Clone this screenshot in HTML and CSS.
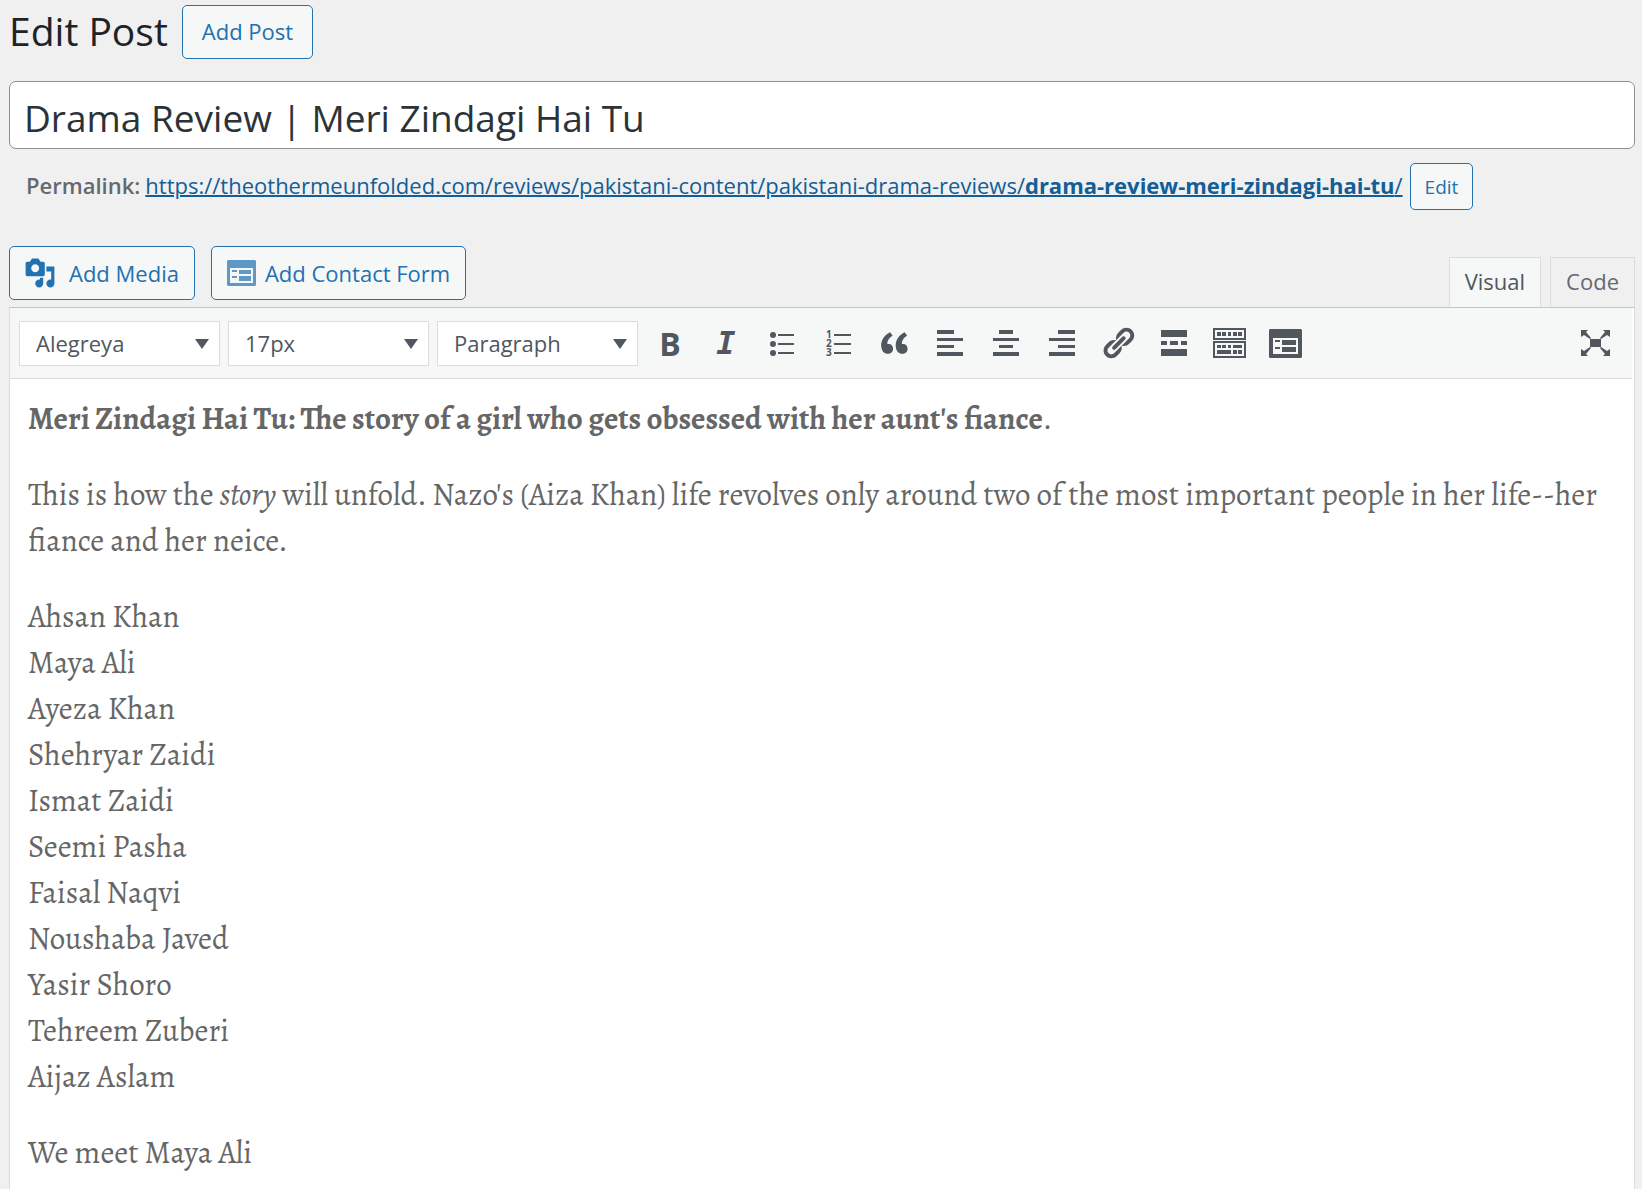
FILE: index.html
```html
<!DOCTYPE html>
<html lang="en">

<head>
  <meta charset="UTF-8">
  <meta name="viewport" content="width=device-width, initial-scale=1.0">
  <title>Edit Post</title>
  <link rel="stylesheet" href="styles.css">
</head>

<body>
  <div class="header">
    <h1>Edit Post</h1>
    <button type="button" class="button">Add Post</button>
  </div>

  <input type="text" class="post-title" id="title" name="title" aria-label="Title" value="Drama Review | Meri Zindagi Hai Tu">

  <div class="permalink">
    <strong>Permalink:</strong>
    <a href="#">https://theothermeunfolded.com/reviews/pakistani-content/pakistani-drama-reviews/<b>drama-review-meri-zindagi-hai-tu</b>/</a>
    <button type="button" class="button small">Edit</button>
  </div>

  <div class="editor-tools">
    <div class="media-buttons">
      <button type="button" class="button media">
        <svg width="32" height="32" viewBox="0 0 20 20"><path d="M13 11V4c0-.55-.45-1-1-1h-1.67L9 1H5L3.67 3H2c-.55 0-1 .45-1 1v7c0 .55.45 1 1 1h10c.55 0 1-.45 1-1zM7 4.500c1.380 0 2.500 1.120 2.500 2.500S8.380 9.500 7 9.500 4.500 8.380 4.500 7 5.620 4.500 7 4.500zM14 6h5v10.500c0 1.380-1.120 2.500-2.500 2.500S14 17.880 14 16.500s1.120-2.500 2.500-2.500c.17 0 .34.02.5.05V9h-3V6zm-4 8.050V13h2v3.500c0 1.380-1.120 2.500-2.500 2.500S7 17.880 7 16.500 8.120 14 9.500 14c.17 0 .34.02.5.05z"/></svg>
        Add Media
      </button>
      <button type="button" class="button form">
        <svg class="form-icon" width="29" height="26" viewBox="0 0 29 26"><path fill-rule="evenodd" d="M1 0h27l1 1v24l-1 1H1l-1-1V1zM3 8v15h23V8zM5 10h5v2H5zM12 10h12v4H12zM5 16h5v2H5zM12 16h12v5H12z"/></svg>
        Add Contact Form
      </button>
    </div>
    <div class="tabs">
      <button type="button" class="tab active">Visual</button>
      <button type="button" class="tab">Code</button>
    </div>
  </div>

  <div class="editor">
    <div class="toolbar">
      <div class="select"><select aria-label="Font family"><option>Alegreya</option></select></div>
      <div class="select"><select aria-label="Font size"><option>17px</option></select></div>
      <div class="select"><select aria-label="Format"><option>Paragraph</option></select></div>
      <div class="icons">
        <button type="button" class="icon bold" title="Bold">B</button>
        <button type="button" class="icon italic" title="Italic">I</button>
        <button type="button" class="icon" title="Bulleted list">
          <svg width="36" height="36" viewBox="0 0 36 36"><circle cx="9" cy="10" r="3"/><circle cx="9" cy="19" r="3"/><circle cx="9" cy="28" r="3"/><path d="M14 9h16v2H14zM14 18h16v2H14zM14 27h16v2H14z"/></svg>
        </button>
        <button type="button" class="icon" title="Numbered list">
          <svg width="36" height="36" viewBox="0 0 36 36"><text x="6" y="13">1</text><text x="6" y="22">2</text><text x="6" y="31">3</text><path d="M14 9h17v2H14zM14 18h17v2H14zM14 27h17v2H14z"/></svg>
        </button>
        <button type="button" class="icon" title="Blockquote">
          <svg width="36" height="36" viewBox="0 0 20 20"><path d="M9.490 13.220c0-.74-.2-1.380-.61-1.900-.62-.78-1.830-.88-2.530-.72-.29-1.650 1.110-3.750 2.920-4.650L7.880 4c-2.730 1.300-5.420 4.280-4.960 8.050C3.210 14.430 4.590 16 6.540 16c.85 0 1.560-.25 2.120-.75s.83-1.180.83-2.030zm8.050 0c0-.74-.2-1.380-.61-1.900-.63-.78-1.830-.88-2.530-.72-.29-1.650 1.110-3.750 2.920-4.650L15.930 4c-2.730 1.300-5.410 4.280-4.950 8.050.29 2.380 1.660 3.950 3.610 3.950.85 0 1.560-.25 2.120-.75s.83-1.180.83-2.030z"/></svg>
        </button>
        <button type="button" class="icon" title="Align left">
          <svg width="36" height="36" viewBox="0 0 36 36"><path d="M5 5h17v4H5zM5 13h26v3H5zM5 20h17v3H5zM5 27h26v4H5z"/></svg>
        </button>
        <button type="button" class="icon" title="Align center">
          <svg width="36" height="36" viewBox="0 0 36 36"><path d="M11 5h14v4H11zM5 13h26v3H5zM11 20h14v3H11zM5 27h26v4H5z"/></svg>
        </button>
        <button type="button" class="icon" title="Align right">
          <svg width="36" height="36" viewBox="0 0 36 36"><path d="M14 5h17v4H14zM5 13h26v3H5zM14 20h17v3H14zM5 27h26v4H5z"/></svg>
        </button>
        <button type="button" class="icon" title="Insert link">
          <svg width="36" height="36" viewBox="0 0 20 20"><path d="M17.740 2.760c1.680 1.690 1.680 4.410 0 6.100l-1.530 1.520c-1.120 1.120-2.700 1.470-4.140 1.090l2.620-2.610.76-.77.76-.76c.84-.84.84-2.200 0-3.040-.84-.85-2.200-.85-3.040 0l-.77.76-3.380 3.380c-.37-1.440-.02-3.020 1.100-4.140l1.520-1.530c1.690-1.680 4.420-1.680 6.100 0zM8.590 13.430l5.340-5.340c.42-.42.42-1.100 0-1.520-.44-.43-1.130-.39-1.530 0l-5.330 5.340c-.42.42-.42 1.100 0 1.520.44.43 1.130.39 1.520 0zm-.76 2.290l4.140-4.150c.38 1.440.03 3.020-1.090 4.140l-1.520 1.530c-1.690 1.680-4.410 1.680-6.100 0-1.680-1.680-1.680-4.420 0-6.100l1.530-1.520c1.120-1.120 2.700-1.470 4.140-1.100l-4.140 4.150c-.85.84-.85 2.200 0 3.050.84.84 2.200.84 3.040 0z"/></svg>
        </button>
        <button type="button" class="icon" title="Read more">
          <svg width="36" height="36" viewBox="0 0 36 36"><path d="M5 5h26v7H5zM5 16h6v4H5zM14 16h8v4h-8zM25 16h6v4h-6zM5 24h26v7H5z"/></svg>
        </button>
        <button type="button" class="icon" title="Toolbar toggle">
          <svg width="36" height="36" viewBox="0 0 36 36"><path fill-rule="evenodd" d="M1 3h33v12H1zM3 5v8h29V5zM5 7h4v4H5zM10 7h4v4h-4zM16 7h3v4h-3zM21 7h4v4h-4zM26 7h4v4h-4zM1 16h33v17H1zM3 18v13h29V18zM5 20h4v3H5zM10 20h4v3h-4zM16 20h3v3h-3zM21 20h9v3h-9zM5 25h14v4H5zM21 25h4v4h-4zM26 25h4v4h-4z"/></svg>
        </button>
        <button type="button" class="icon" title="Contact form">
          <svg width="36" height="36" viewBox="0 0 36 36"><path fill-rule="evenodd" d="M2 4h31l1 1v27l-1 1H2l-1-1V5zM5 13v16h25V13zM7 15h5v2H7zM14 15h14v5H14zM7 22h5v2H7zM14 22h14v5H14z"/></svg>
        </button>
      </div>
      <button type="button" class="icon fullscreen" title="Distraction-free writing mode">
        <svg width="36" height="36" viewBox="0 0 36 36"><path d="M13 14h11v8H13zM4 5h7l-2 2 5 6-1 1-6-4-3 2zM33 5h-7l2 2-5 6 1 1 6-4 3 2zM4 31h7l-2-2 5-6-1-1-6 4-3-2zM33 31h-7l2-2-5-6 1-1 6 4 3-2z"/></svg>
      </button>
    </div>

    <div class="content" contenteditable="true" spellcheck="false">
      <p><strong>Meri Zindagi Hai Tu: The story of a girl who gets obsessed with her aunt's fiance</strong>.</p>
      <p>This is how the <em>story</em> will unfold. Nazo's (Aiza Khan) life revolves only around two of the most important people in her life--her fiance and her neice.</p>
      <p>Ahsan Khan<br>
        Maya Ali<br>
        Ayeza Khan<br>
        Shehryar Zaidi<br>
        Ismat Zaidi<br>
        Seemi Pasha<br>
        Faisal Naqvi<br>
        Noushaba Javed<br>
        Yasir Shoro<br>
        Tehreem Zuberi<br>
        Aijaz Aslam</p>
      <p>We meet Maya Ali</p>
    </div>
  </div>
</body>

</html>
```
FILE: styles.css
```css
* {
  box-sizing: border-box;
}

body {
  display: flex;
  flex-direction: column;
  min-height: 100vh;
  margin: 0;
  padding: 5px 7px 0 9px;
  background-color: #f0f0f1;
  color: #646970;
  font-family: "Open Sans", "Noto Sans", sans-serif;
  font-size: 22px;
}

button,
input,
select {
  font-family: inherit;
  font-size: 22px;
}

svg {
  display: block;
  flex: none;
  fill: currentColor;
}

.header {
  display: flex;
  align-items: center;
  gap: 14px;
}

h1 {
  margin: 0;
  color: #1d2327;
  font-size: 39px;
  font-weight: 400;
  line-height: 52px;
  padding-bottom: 2px;
}

.button {
  display: flex;
  align-items: center;
  height: 54px;
  padding: 0 19px 2px;
  border: 1px solid #2271b1;
  border-radius: 5px;
  background-color: #f6f7f7;
  color: #2271b1;
  white-space: nowrap;
  cursor: pointer;
}

.button.small {
  height: 47px;
  padding: 0 14px;
  font-size: 19px;
}

.button.media {
  gap: 13px;
  padding: 0 15px 0 14px;
}

.button.form {
  gap: 9px;
  padding: 0 15px;
}

.form-icon {
  opacity: 0.7;
}

.post-title {
  width: 100%;
  height: 68px;
  margin-top: 22px;
  padding: 4px 14px 0;
  border: 1px solid #8c8f94;
  border-radius: 7px;
  background-color: #fff;
  color: #2c3338;
  font-size: 37px;
}

.permalink {
  display: flex;
  align-items: center;
  margin-top: 14px;
  padding-left: 17px;
  line-height: 43px;
  white-space: nowrap;
}

.permalink strong {
  font-weight: 600;
}

.permalink strong,
.permalink a {
  padding-bottom: 2px;
}

.permalink a {
  margin: 0 7px 0 5px;
  color: #135e96;
  text-decoration-thickness: 2px;
}

.permalink b {
  font-weight: 700;
}

.editor-tools {
  display: flex;
  justify-content: space-between;
  align-items: flex-end;
  margin-top: 36px;
}

.media-buttons {
  display: flex;
  gap: 16px;
  margin-bottom: 7px;
}

.tabs {
  display: flex;
  gap: 9px;
}

.tab {
  height: 50px;
  padding: 0 15px 4px;
  border: 1px solid #dcdcde;
  border-bottom: none;
  background-color: #f0f0f1;
  color: #646970;
  cursor: pointer;
}

.tab.active {
  background-color: #f6f7f7;
  color: #50575e;
}

.editor {
  flex: 1;
  border: 1px solid #dcdcde;
  border-top-color: #c3c4c7;
  border-bottom: none;
  background-color: #fff;
}

.toolbar {
  display: flex;
  align-items: center;
  gap: 8px;
  height: 71px;
  margin-right: 2px;
  padding: 0 19px 0 9px;
  border-bottom: 1px solid #dcdcde;
  background-color: #f6f7f7;
}

.select {
  position: relative;
  width: 201px;
}

.select select {
  display: block;
  width: 100%;
  height: 45px;
  padding: 0 32px 0 16px;
  border: 1px solid #dcdcde;
  border-radius: 0;
  background-color: #fff;
  color: #50575e;
  appearance: none;
}

/* dropdown arrow */
.select::after {
  content: "";
  position: absolute;
  top: 18px;
  right: 11px;
  border: 7px solid transparent;
  border-top: 10px solid #50575e;
  border-bottom: none;
  pointer-events: none;
}

.icons {
  display: flex;
  gap: 20px;
  margin-left: 6px;
}

.icon {
  display: flex;
  align-items: center;
  justify-content: center;
  width: 36px;
  height: 36px;
  padding: 0;
  border: none;
  background: none;
  color: #50575e;
  cursor: pointer;
}

.icon text {
  font-size: 10px;
  font-weight: 700;
}

.bold {
  font-size: 32px;
  font-weight: 700;
}

.italic {
  font-family: "DejaVu Sans Mono", monospace;
  font-size: 32px;
  font-style: italic;
  font-weight: 700;
}

.fullscreen {
  margin-left: auto;
}

.content {
  padding: 17px 18px 0;
  outline: none;
  color: #666;
  font-family: Alegreya, "Liberation Serif", serif;
  font-size: 31px;
  line-height: 46px;
}

.content p {
  margin: 0 0 30px;
}

.content p:last-child {
  margin-bottom: 0;
}
```
